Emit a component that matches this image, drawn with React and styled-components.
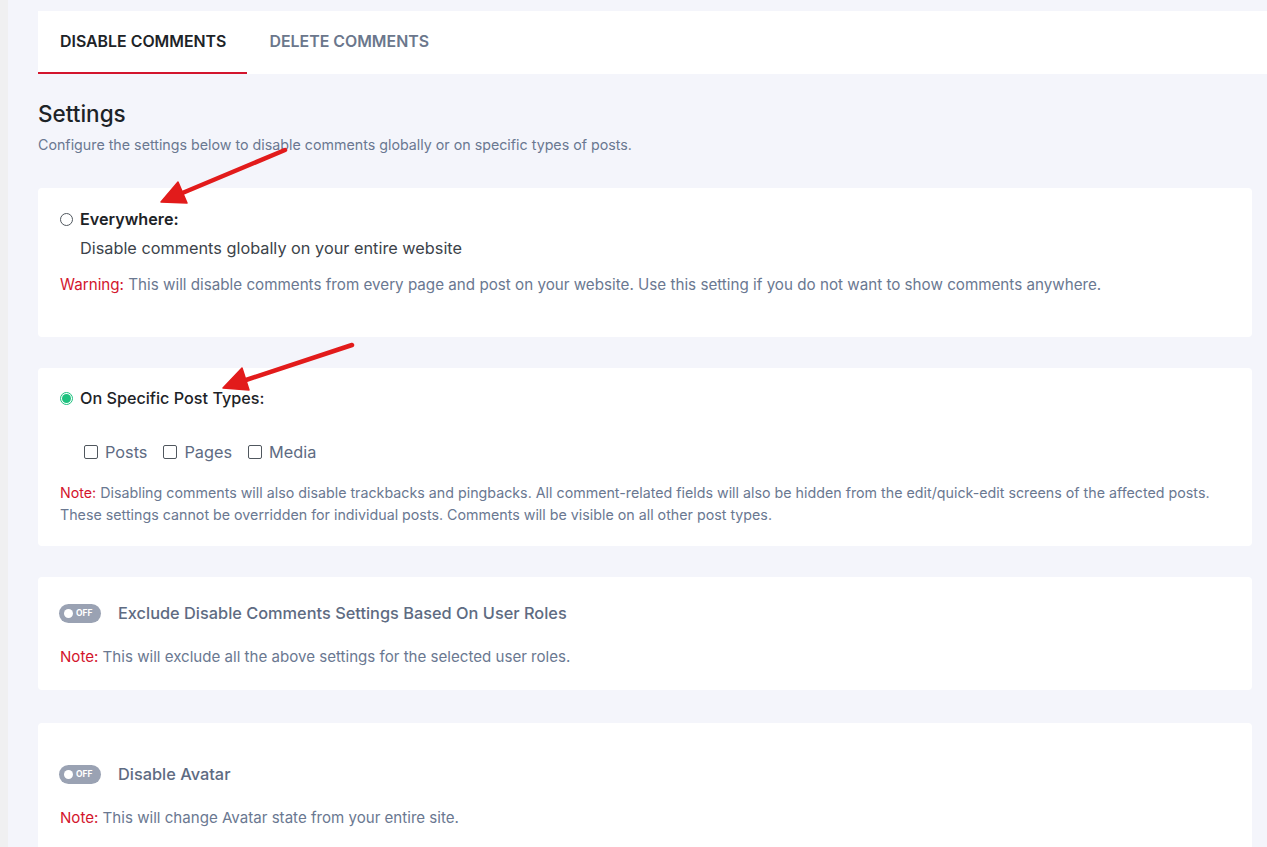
import React from "react";
import styled, { createGlobalStyle } from "styled-components";

const Global = createGlobalStyle`
  html, body { margin: 0; padding: 0; }
  body {
    background: #f0f0f1;
    font-family: "Inter", "Noto Sans", sans-serif;
    -webkit-font-smoothing: antialiased;
  }
`;

const Shell = styled.div`
  position: relative;
  display: flex;
  min-height: 847px;
  overflow: hidden;
`;

const Gutter = styled.div`
  width: 8px;
  flex: none;
  background: #f0f0f1;
`;

const Main = styled.div`
  flex: 1;
  background: #f4f5fb;
  padding: 11px 15px 0 30px;
`;

const TabBar = styled.div`
  display: flex;
  background: #fff;
  height: 63px;
  margin-right: -15px;
`;

const Tab = styled.div`
  display: flex;
  align-items: center;
  padding: 0 21px 0 22px;
  font-size: 15.9px;
  font-weight: 600;
  text-transform: uppercase;
  color: ${(p) => (p.$active ? "#1d2327" : "#6b778c")};
  border-bottom: 2px solid ${(p) => (p.$active ? "#d3152d" : "transparent")};
  box-sizing: border-box;
`;

const Heading = styled.h2`
  margin: 26px 0 0 0;
  font-size: 22.5px;
  font-weight: 500;
  line-height: 28px;
  color: #1d2327;
`;

const Sub = styled.p`
  margin: 7px 0 0 0;
  font-size: 14.25px;
  line-height: 20px;
  color: #6a7891;
`;

const Cards = styled.div`
  display: flex;
  flex-direction: column;
  gap: 31px;
  margin-top: 33px;
`;

const Card = styled.div`
  background: #fff;
  border-radius: 4px;
  padding: ${(p) => p.$pad || "20px 22px 30px"};
  margin-top: ${(p) => p.$mt || "0"};
`;

const RadioRow = styled.div`
  display: flex;
  align-items: center;
  gap: 7px;
  height: 22px;
`;

const Radio = styled.span`
  width: 13px;
  height: 13px;
  box-sizing: border-box;
  border-radius: 50%;
  border: 1px solid ${(p) => (p.$checked ? "#1ec27f" : "#50575e")};
  display: flex;
  align-items: center;
  justify-content: center;
  &::after {
    content: "";
    display: ${(p) => (p.$checked ? "block" : "none")};
    width: 9px;
    height: 9px;
    border-radius: 50%;
    background: #1ec27f;
  }
`;

const RadioLabel = styled.span`
  font-size: 16.2px;
  font-weight: ${(p) => (p.$bold ? 600 : 500)};
  color: #1d2327;
`;

const Desc = styled.div`
  margin: 7px 0 0 20px;
  font-size: 16.3px;
  line-height: 22px;
  color: #3c434a;
`;

const Note = styled.p`
  margin: ${(p) => p.$m || "14px 0 0 0"};
  font-size: ${(p) => p.$size || "14px"};
  line-height: 22px;
  color: #6a7891;
`;

const Red = styled.span`
  color: #d3152d;
`;

const Checks = styled.div`
  display: flex;
  gap: 16px;
  margin: 32px 0 0 24px;
`;

const CheckItem = styled.label`
  display: flex;
  align-items: center;
  gap: 7px;
  font-size: 16.3px;
  color: #5e6b82;
  line-height: 22px;
`;

const Box = styled.span`
  width: 14px;
  height: 14px;
  box-sizing: border-box;
  border: 1px solid #50575e;
  border-radius: 2px;
`;

const ToggleRow = styled.div`
  display: flex;
  align-items: center;
  gap: 17px;
  height: 22px;
`;

const Toggle = styled.span`
  width: 42px;
  height: 19px;
  border-radius: 10px;
  background: #9aa2b3;
  display: flex;
  align-items: center;
  gap: 3px;
  padding-left: 5px;
  box-sizing: border-box;
  font-size: 8.5px;
  font-weight: 700;
  color: #fff;
  &::before {
    content: "";
    width: 9px;
    height: 9px;
    border-radius: 50%;
    background: #fff;
  }
`;

const ToggleLabel = styled.span`
  font-size: 16.35px;
  font-weight: 500;
  color: #5e6b82;
`;

const Arrows = styled.svg`
  position: absolute;
  left: 0;
  top: 0;
  pointer-events: none;
`;

export default function App() {
  return (
    <Shell>
      <Global />
      <Gutter />
      <Main>
        <TabBar>
          <Tab $active>Disable Comments</Tab>
          <Tab>Delete Comments</Tab>
        </TabBar>
        <Heading>Settings</Heading>
        <Sub>Configure the settings below to disable comments globally or on specific types of posts.</Sub>
        <Cards>
          <Card $pad="20px 22px 41px">
            <RadioRow>
              <Radio />
              <RadioLabel $bold>Everywhere:</RadioLabel>
            </RadioRow>
            <Desc>Disable comments globally on your entire website</Desc>
            <Note $size="15.2px" $m="15px 0 0 0">
              <Red>Warning:</Red> This will disable comments from every page and post on your website. Use this setting if you do not want to show comments anywhere.
            </Note>
          </Card>
          <Card $pad="19px 22px 20px">
            <RadioRow>
              <Radio $checked />
              <RadioLabel>On Specific Post Types:</RadioLabel>
            </RadioRow>
            <Checks>
              <CheckItem><Box />Posts</CheckItem>
              <CheckItem><Box />Pages</CheckItem>
              <CheckItem><Box />Media</CheckItem>
            </Checks>
            <Note $size="14.25px" $m="19px 0 0 0">
              <Red>Note:</Red> Disabling comments will also disable trackbacks and pingbacks. All comment-related fields will also be hidden from the edit/quick-edit screens of the affected posts. These settings cannot be overridden for individual posts. Comments will be visible on all other post types.
            </Note>
          </Card>
          <Card $pad="25px 22px 22px 21px">
            <ToggleRow>
              <Toggle>OFF</Toggle>
              <ToggleLabel>Exclude Disable Comments Settings Based On User Roles</ToggleLabel>
            </ToggleRow>
            <Note $size="15.1px" $m="22px 0 0 1px">
              <Red>Note:</Red> This will exclude all the above settings for the selected user roles.
            </Note>
          </Card>
          <Card $mt="2px" $pad="40px 22px 23px 21px">
            <ToggleRow>
              <Toggle>OFF</Toggle>
              <ToggleLabel>Disable Avatar</ToggleLabel>
            </ToggleRow>
            <Note $size="15.1px" $m="22px 0 0 1px">
              <Red>Note:</Red> This will change Avatar state from your entire site.
            </Note>
          </Card>
        </Cards>
      </Main>
      <Arrows width="1267" height="847" viewBox="0 0 1267 847">
        <g fill="#e21b1b" stroke="#e21b1b" strokeLinecap="round" strokeLinejoin="round">
          <line x1="285" y1="150" x2="180" y2="194" strokeWidth="4.5" />
          <polygon points="161,202 178,182 187,203" strokeWidth="1.5" />
          <line x1="352" y1="345" x2="243" y2="381" strokeWidth="4.5" />
          <polygon points="223,388 242,368 249,390" strokeWidth="1.5" />
        </g>
      </Arrows>
    </Shell>
  );
}
